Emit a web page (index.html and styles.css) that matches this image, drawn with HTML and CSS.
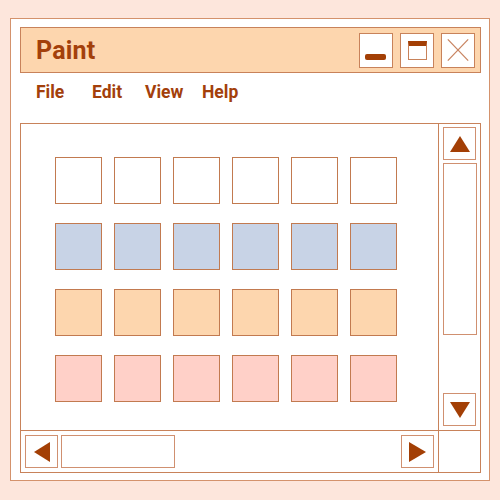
FILE: index.html
```html
<!DOCTYPE html>
<html>
<head>
<meta charset="utf-8">
<link rel="stylesheet" href="styles.css">
</head>
<body>
<div class="window">
  <div class="titlebar">
    <span class="title">Paint</span>
    <div class="controls">
      <div class="ctl"><span class="min-bar"></span></div>
      <div class="ctl"><span class="max-box"></span></div>
      <div class="ctl">
        <svg width="33" height="34" viewBox="0 0 33 34"><path d="M6 6 L27 28 M27 6 L6 28" stroke="#c98562" stroke-width="1.3" fill="none"/></svg>
      </div>
    </div>
  </div>
  <div class="menu">
    <span class="item file">File</span>
    <span class="item edit">Edit</span>
    <span class="item view">View</span>
    <span class="item help">Help</span>
  </div>
  <div class="panel">
    <div class="canvas">
      <div class="swatches">
        <div class="sw white"></div><div class="sw white"></div><div class="sw white"></div><div class="sw white"></div><div class="sw white"></div><div class="sw white"></div>
        <div class="sw blue"></div><div class="sw blue"></div><div class="sw blue"></div><div class="sw blue"></div><div class="sw blue"></div><div class="sw blue"></div>
        <div class="sw peach"></div><div class="sw peach"></div><div class="sw peach"></div><div class="sw peach"></div><div class="sw peach"></div><div class="sw peach"></div>
        <div class="sw pink"></div><div class="sw pink"></div><div class="sw pink"></div><div class="sw pink"></div><div class="sw pink"></div><div class="sw pink"></div>
      </div>
    </div>
    <div class="vscroll">
      <div class="btn"><svg width="20" height="16" viewBox="0 0 20 16"><polygon points="10,0 20,16 0,16" fill="#a33f05"/></svg></div>
      <div class="vtrack"></div>
      <div class="btn down"><svg width="20" height="16" viewBox="0 0 20 16"><polygon points="0,0 20,0 10,16" fill="#a33f05"/></svg></div>
    </div>
    <div class="hscroll">
      <div class="btn"><svg width="16" height="20" viewBox="0 0 16 20"><polygon points="0,10 16,0 16,20" fill="#a33f05"/></svg></div>
      <div class="htrack"></div>
      <div class="btn right"><svg width="17" height="20" viewBox="0 0 17 20"><polygon points="0,0 17,10 0,20" fill="#a33f05"/></svg></div>
    </div>
    <div class="corner"></div>
  </div>
</div>
</body>
</html>
```

FILE: styles.css
```css
html, body {
  margin: 0;
  padding: 0;
}
body {
  background: #fde6dc;
  width: 500px;
  height: 500px;
  font-family: Roboto, "Liberation Sans", sans-serif;
}
.window {
  box-sizing: border-box;
  margin: 18px 0 0 10px;
  width: 480px;
  height: 463px;
  background: #ffffff;
  border: 1.5px solid #d4926c;
  padding: 8px 8px 7px 9px;
  display: flex;
  flex-direction: column;
}
.titlebar {
  box-sizing: border-box;
  height: 46px;
  background: #fdd6ae;
  border: 1.5px solid #c8825a;
  display: flex;
  align-items: center;
  justify-content: space-between;
  padding: 0 5px 0 15px;
}
.title {
  font-size: 25px;
  font-weight: 700;
  color: #a3400b;
  letter-spacing: 0.2px;
}
.controls {
  display: flex;
  gap: 7px;
}
.ctl {
  box-sizing: border-box;
  width: 34px;
  height: 35px;
  background: #ffffff;
  border: 1.5px solid #c8825a;
  display: flex;
  align-items: center;
  justify-content: center;
  position: relative;
}
.min-bar {
  position: absolute;
  left: 5px;
  top: 20px;
  width: 21px;
  height: 6px;
  border-radius: 2px;
  background: #a33f05;
}
.max-box {
  box-sizing: border-box;
  width: 19px;
  height: 19px;
  border: 1.2px solid #c8825a;
  border-top: 5px solid #a33f05;
}
.menu {
  box-sizing: border-box;
  height: 50px;
  display: flex;
  align-items: center;
  padding: 0 0 12px 16px;
}
.item {
  font-size: 17.5px;
  font-weight: 700;
  color: #a3400b;
}
.file { width: 56px; }
.edit { width: 53px; }
.view { width: 57px; }
.panel {
  box-sizing: border-box;
  flex: 1;
  border: 1.5px solid #c8825a;
  display: grid;
  grid-template-columns: 1fr 41px;
  grid-template-rows: 1fr 41px;
}
.canvas {
  border-right: 1.5px solid #c8825a;
  border-bottom: 1.5px solid #c8825a;
  padding: 33px 0 0 34px;
}
.swatches {
  display: grid;
  grid-template-columns: repeat(6, 47px);
  grid-auto-rows: 47px;
  column-gap: 12px;
  row-gap: 19px;
}
.sw {
  box-sizing: border-box;
  border: 1.5px solid #c27a50;
}
.white { background: #ffffff; }
.blue { background: #c8d3e6; }
.peach { background: #fdd6ae; }
.pink { background: #ffd0c8; }
.vscroll {
  border-bottom: 1.5px solid #c8825a;
  display: flex;
  flex-direction: column;
  padding: 3px 3px 4px 4px;
  gap: 3px;
}
.btn {
  box-sizing: border-box;
  width: 33px;
  height: 33px;
  border: 1.5px solid #d09070;
  display: flex;
  align-items: center;
  justify-content: center;
  flex: none;
}
.vtrack {
  box-sizing: border-box;
  height: 172px;
  border: 1.5px solid #d09070;
}
.down {
  margin-top: auto;
}
.hscroll {
  border-right: 1.5px solid #c8825a;
  display: flex;
  align-items: center;
  padding: 3px 4px 3px 4px;
  gap: 3px;
}
.htrack {
  box-sizing: border-box;
  width: 114px;
  height: 33px;
  border: 1.5px solid #d09070;
}
.right {
  margin-left: auto;
}
```
